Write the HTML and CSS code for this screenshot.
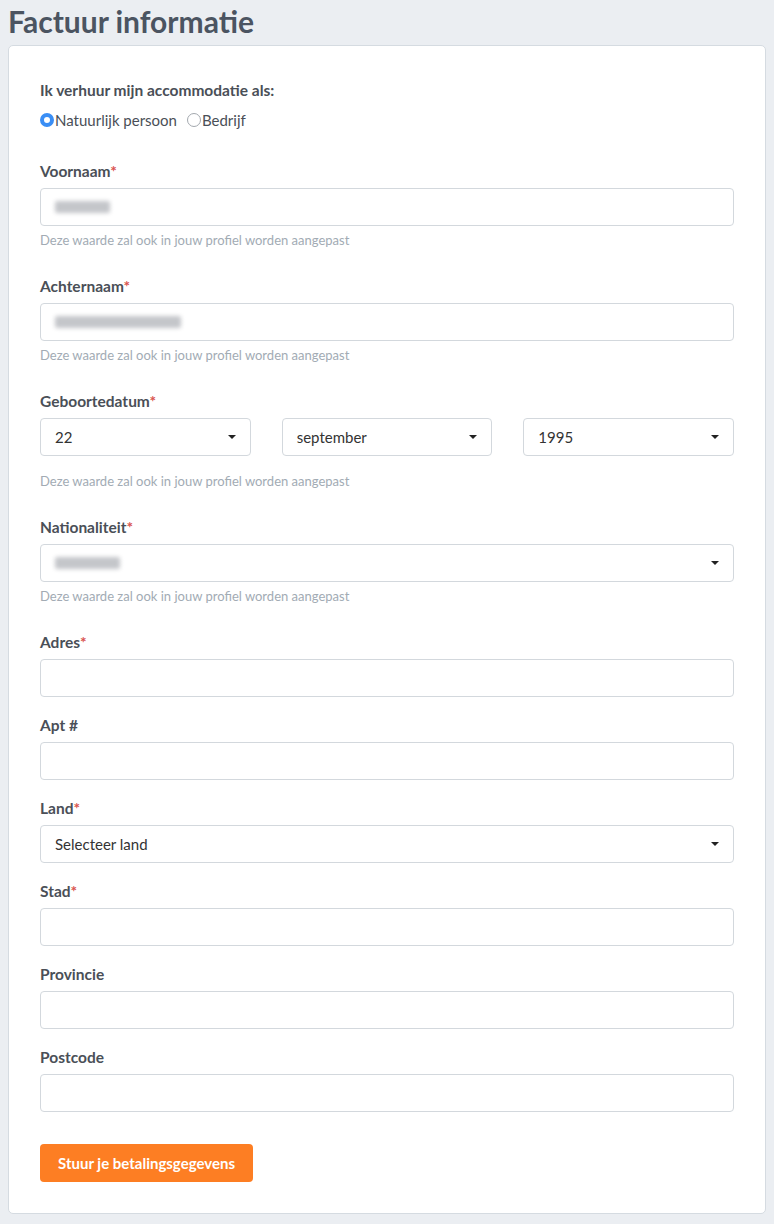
FILE: index.html
```html
<!DOCTYPE html>
<html lang="nl">
<head>
<meta charset="utf-8">
<title>Factuur informatie</title>
<link rel="stylesheet" href="styles.css">
</head>
<body>
<h1 class="page-title">Factuur informatie</h1>
<form class="card">
  <div class="group group-type">
    <div class="label">Ik verhuur mijn accommodatie als:</div>
    <div class="radios">
      <label class="radio"><span class="radio-dot checked"></span>Natuurlijk persoon</label>
      <label class="radio"><span class="radio-dot"></span>Bedrijf</label>
    </div>
  </div>

  <div class="group">
    <div class="label">Voornaam<span class="req">*</span></div>
    <div class="input"><span class="redacted r1"></span></div>
    <div class="help">Deze waarde zal ook in jouw profiel worden aangepast</div>
  </div>

  <div class="group">
    <div class="label">Achternaam<span class="req">*</span></div>
    <div class="input"><span class="redacted r2"></span></div>
    <div class="help">Deze waarde zal ook in jouw profiel worden aangepast</div>
  </div>

  <div class="group">
    <div class="label">Geboortedatum<span class="req">*</span></div>
    <div class="date-row">
      <div class="input select"><span>22</span><span class="caret"></span></div>
      <div class="input select"><span>september</span><span class="caret"></span></div>
      <div class="input select"><span>1995</span><span class="caret"></span></div>
    </div>
    <div class="help help-far">Deze waarde zal ook in jouw profiel worden aangepast</div>
  </div>

  <div class="group">
    <div class="label">Nationaliteit<span class="req">*</span></div>
    <div class="input select"><span class="redacted r3"></span><span class="caret"></span></div>
    <div class="help">Deze waarde zal ook in jouw profiel worden aangepast</div>
  </div>

  <div class="group">
    <div class="label">Adres<span class="req">*</span></div>
    <div class="input"></div>
  </div>

  <div class="group">
    <div class="label">Apt #</div>
    <div class="input"></div>
  </div>

  <div class="group">
    <div class="label">Land<span class="req">*</span></div>
    <div class="input select"><span>Selecteer land</span><span class="caret"></span></div>
  </div>

  <div class="group">
    <div class="label">Stad<span class="req">*</span></div>
    <div class="input"></div>
  </div>

  <div class="group">
    <div class="label">Provincie</div>
    <div class="input"></div>
  </div>

  <div class="group">
    <div class="label">Postcode</div>
    <div class="input"></div>
  </div>

  <div class="actions">
    <button type="button" class="btn">Stuur je betalingsgegevens</button>
  </div>
</form>
</body>
</html>
```
FILE: styles.css
```css
* { box-sizing: border-box; }
html, body { margin: 0; }
body {
  background: #ebeef2;
  font-family: Lato, "Open Sans", "Liberation Sans", sans-serif;
  color: #4a4f57;
  padding: 0 8px 10px 8px;
}
.page-title {
  margin: 0;
  height: 45px;
  line-height: 42px;
  font-size: 30px;
  font-weight: 700;
  color: #4b5461;
}
.card {
  background: #fff;
  border: 1px solid #d5dbe1;
  border-radius: 5px;
  padding: 34px 31px 31px 31px;
}
.group { margin-bottom: 18px; }
.group-type { margin-bottom: 31px; }
.label {
  font-size: 15.5px;
  font-weight: 700;
  line-height: 20px;
  margin-bottom: 7px;
  color: #4a4f57;
}
.group-type .label { margin-bottom: 10px; }
.req { color: #d9534f; }
.radios { display: flex; gap: 10px; height: 20px; align-items: center; }
.radio {
  display: flex;
  align-items: center;
  font-size: 15px;
  color: #4a4f57;
}
.radio-dot {
  width: 14px;
  height: 14px;
  border-radius: 50%;
  border: 1px solid #a3a8ae;
  background: #fff;
  margin-right: 1px;
}
.radio-dot.checked {
  border: 4px solid #3a8ef5;
  background: #fff;
}
.input {
  height: 38px;
  border: 1px solid #d3d8dd;
  border-radius: 4px;
  background: #fff;
  display: flex;
  align-items: center;
  padding: 0 14px 0 14px;
  font-size: 15px;
  color: #333;
}
.select { justify-content: space-between; }
.caret {
  width: 0;
  height: 0;
  border-left: 4px solid transparent;
  border-right: 4px solid transparent;
  border-top: 4px solid #222;
}
.redacted {
  display: block;
  height: 12px;
  background: #c4c6ca;
  filter: blur(2px);
  border-radius: 2px;
}
.r1 { width: 55px; }
.r2 { width: 126px; }
.r3 { width: 65px; }
.help {
  font-size: 13px;
  line-height: 16px;
  margin-top: 6px;
  padding-bottom: 10px;
  color: #a2abb4;
}
.help-far { margin-top: 17px; }
.date-row {
  display: grid;
  grid-template-columns: repeat(3, 1fr);
  gap: 31px;
}
.actions { padding-top: 14px; }
.btn {
  height: 38px;
  padding: 0 18px;
  border: none;
  border-radius: 4px;
  background: #fd7e23;
  color: #fff;
  font-family: inherit;
  font-size: 15px;
  font-weight: 700;
  cursor: pointer;
}
```
